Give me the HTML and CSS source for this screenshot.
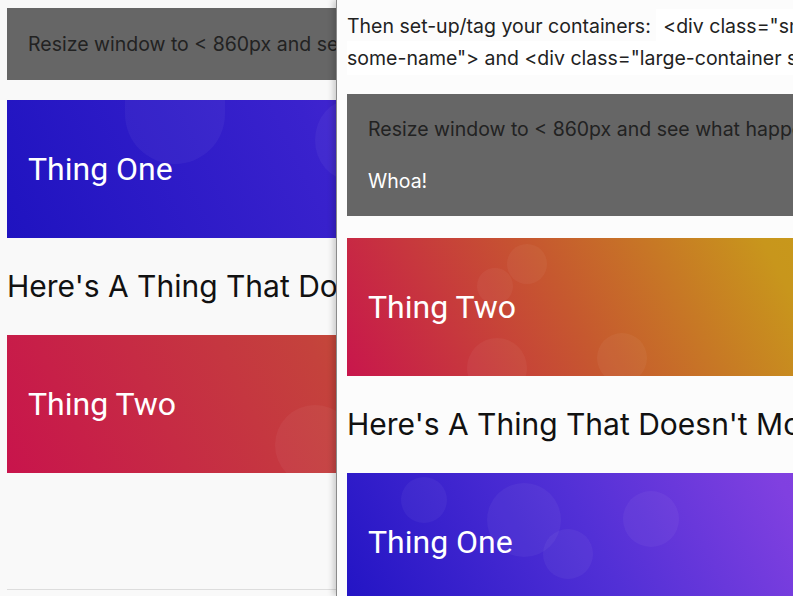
FILE: index.html
```html
<!DOCTYPE html>
<html lang="en">
<head>
    <meta charset="utf-8">
    <meta name="viewport" content="width=device-width,initial-scale=1">
    <title>Moving Containers</title>
    <link rel="stylesheet" href="styles.css">
</head>
<body>
    <div class="page">
        <div class="note">
            <p>Resize window to &lt; 860px and see what happens.</p>
        </div>
        <div class="thing thing-one">
            <span class="bubble b1"></span>
            <span class="bubble b2"></span>
            <h2>Thing One</h2>
        </div>
        <h3 class="static">Here's A Thing That Doesn't Move</h3>
        <div class="thing thing-two">
            <span class="bubble b3"></span>
            <h2>Thing Two</h2>
        </div>
        <div class="rule"></div>
    </div>

    <div class="panel">
        <p class="intro">Then set-up/tag your containers: <code>&lt;div class="small-container some-name"&gt; and &lt;div class="large-container some-name"&gt;</code></p>
        <div class="note">
            <p>Resize window to &lt; 860px and see what happens.</p>
            <p class="whoa">Whoa!</p>
        </div>
        <div class="thing thing-two">
            <span class="bubble b4"></span>
            <span class="bubble b5"></span>
            <span class="bubble b6"></span>
            <span class="bubble b7"></span>
            <h2>Thing Two</h2>
        </div>
        <h3 class="static">Here's A Thing That Doesn't Move</h3>
        <div class="thing thing-one">
            <span class="bubble b8"></span>
            <span class="bubble b9"></span>
            <span class="bubble b10"></span>
            <span class="bubble b11"></span>
            <h2>Thing One</h2>
        </div>
    </div>
</body>
</html>
```

FILE: styles.css
```css
* {
    margin: 0;
    padding: 0;
    box-sizing: border-box;
}

body {
    background: #f9f9f9;
    color: #111;
    font-family: Inter, 'Noto Sans', sans-serif;
    height: 596px;
    overflow: hidden;
    position: relative;
}

.page {
    padding: 8px 7px;
}

.note {
    background: #666;
    color: #222;
    padding: 24px 21px;
    font-size: 19.5px;
    line-height: 24px;
    margin-bottom: 20px;
    white-space: nowrap;
}

.note .whoa {
    color: #fff;
    margin-top: 28px;
}

.thing {
    height: 138px;
    padding: 0 21px;
    display: flex;
    align-items: center;
    position: relative;
    overflow: hidden;
}

.thing h2 {
    color: #fff;
    font-family: Roboto, 'Liberation Sans', sans-serif;
    font-weight: 400;
    font-size: 32px;
    position: relative;
}

.page .thing-one {
    background: linear-gradient(65deg, #1f13c0 0%, #3a22cd 42%, #7a3ee0 100%);
}

.page .thing-two {
    background: linear-gradient(65deg, #c8144c 0%, #c4423c 43%, #c89a1c 100%);
}

.static {
    font-weight: 400;
    font-size: 30px;
    line-height: 34px;
    margin: 31px 0 32px;
    white-space: nowrap;
}

.rule {
    margin-top: 116px;
    border-top: 1px solid #ddd;
}

.bubble {
    position: absolute;
    border-radius: 50%;
    background: rgba(255, 255, 255, 0.045);
}

.b1 { left: 118px; top: 0; width: 100px; height: 64px; border-radius: 0 0 50px 50px; }
.b2 { left: 308px; top: 0; width: 70px; height: 80px; }
.b3 { left: 268px; top: 70px; width: 80px; height: 80px; }
.b4 { left: 160px; top: 6px; width: 40px; height: 40px; }
.b5 { left: 130px; top: 30px; width: 36px; height: 36px; }
.b6 { left: 120px; top: 100px; width: 60px; height: 60px; }
.b7 { left: 250px; top: 95px; width: 50px; height: 50px; }
.b8 { left: 54px; top: 4px; width: 46px; height: 46px; }
.b9 { left: 140px; top: 10px; width: 74px; height: 74px; }
.b10 { left: 196px; top: 56px; width: 50px; height: 50px; }
.b11 { left: 276px; top: 18px; width: 56px; height: 56px; }

.panel {
    position: absolute;
    top: 0;
    left: 336px;
    width: 625px;
    height: 596px;
    background: #fcfcfc;
    border-left: 1px solid #8a8a8a;
    box-shadow: -3px 0 6px rgba(0, 0, 0, 0.18);
    padding: 10px;
}

.intro {
    font-size: 19.5px;
    line-height: 32px;
    color: #222;
    margin-bottom: 20px;
}

.intro code {
    font-family: inherit;
    background: #fff;
    padding: 5px 7px;
}

.panel .thing-two {
    background: linear-gradient(62deg, #c8164c 0%, #c6582f 38%, #c8961c 72%, #c8a018 100%);
}

.panel .thing-one {
    background: linear-gradient(62deg, #2214c4 0%, #5230d6 42%, #8040e0 74%, #8a44e2 100%);
}

.panel .note {
    margin-bottom: 22px;
    padding: 23px 21px;
}
```
